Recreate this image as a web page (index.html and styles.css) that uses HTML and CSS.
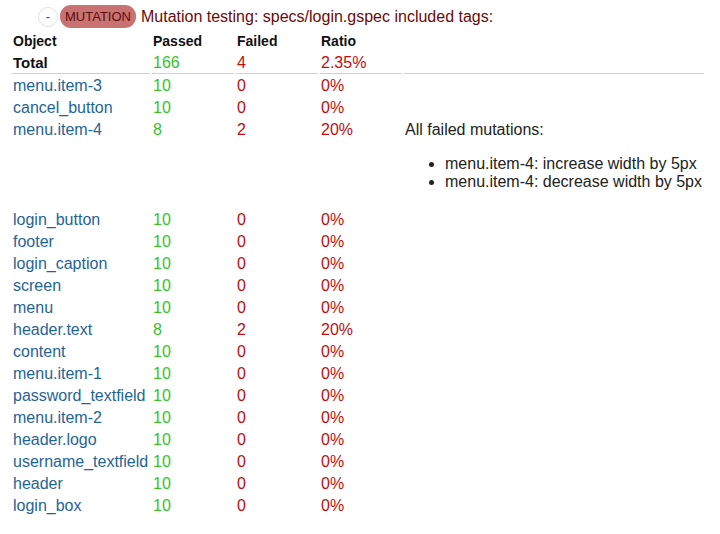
FILE: index.html
```html
<!DOCTYPE html>
<html>
<head>
<meta charset="utf-8">
<link rel="stylesheet" href="styles.css">
</head>
<body>
<div class="report">
  <div class="title">
    <span class="toggle">-</span>
    <span class="badge">MUTATION</span>
    <span class="title-text">Mutation testing: specs/login.gspec included tags:</span>
  </div>
  <table class="results">
    <thead>
      <tr><th class="c-obj">Object</th><th class="c-num">Passed</th><th class="c-num">Failed</th><th class="c-num">Ratio</th><th class="c-info"></th></tr>
    </thead>
    <tbody>
      <tr class="total"><td class="obj">Total</td><td class="pass">166</td><td class="fail">4</td><td class="fail">2.35%</td><td></td></tr>
      <tr><td class="obj">menu.item-3</td><td class="pass">10</td><td class="fail">0</td><td class="fail">0%</td><td></td></tr>
      <tr><td class="obj">cancel_button</td><td class="pass">10</td><td class="fail">0</td><td class="fail">0%</td><td></td></tr>
      <tr><td class="obj">menu.item-4</td><td class="pass">8</td><td class="fail">2</td><td class="fail">20%</td>
        <td class="info">All failed mutations:
          <ul>
            <li>menu.item-4: increase width by 5px</li>
            <li>menu.item-4: decrease width by 5px</li>
          </ul>
        </td></tr>
      <tr><td class="obj">login_button</td><td class="pass">10</td><td class="fail">0</td><td class="fail">0%</td><td></td></tr>
      <tr><td class="obj">footer</td><td class="pass">10</td><td class="fail">0</td><td class="fail">0%</td><td></td></tr>
      <tr><td class="obj">login_caption</td><td class="pass">10</td><td class="fail">0</td><td class="fail">0%</td><td></td></tr>
      <tr><td class="obj">screen</td><td class="pass">10</td><td class="fail">0</td><td class="fail">0%</td><td></td></tr>
      <tr><td class="obj">menu</td><td class="pass">10</td><td class="fail">0</td><td class="fail">0%</td><td></td></tr>
      <tr><td class="obj">header.text</td><td class="pass">8</td><td class="fail">2</td><td class="fail">20%</td><td></td></tr>
      <tr><td class="obj">content</td><td class="pass">10</td><td class="fail">0</td><td class="fail">0%</td><td></td></tr>
      <tr><td class="obj">menu.item-1</td><td class="pass">10</td><td class="fail">0</td><td class="fail">0%</td><td></td></tr>
      <tr><td class="obj">password_textfield</td><td class="pass">10</td><td class="fail">0</td><td class="fail">0%</td><td></td></tr>
      <tr><td class="obj">menu.item-2</td><td class="pass">10</td><td class="fail">0</td><td class="fail">0%</td><td></td></tr>
      <tr><td class="obj">header.logo</td><td class="pass">10</td><td class="fail">0</td><td class="fail">0%</td><td></td></tr>
      <tr><td class="obj">username_textfield</td><td class="pass">10</td><td class="fail">0</td><td class="fail">0%</td><td></td></tr>
      <tr><td class="obj">header</td><td class="pass">10</td><td class="fail">0</td><td class="fail">0%</td><td></td></tr>
      <tr><td class="obj">login_box</td><td class="pass">10</td><td class="fail">0</td><td class="fail">0%</td><td></td></tr>
    </tbody>
  </table>
</div>
</body>
</html>
```

FILE: styles.css
```css
html, body {
  margin: 0;
  padding: 0;
  background: #fff;
}
body {
  font-family: "Liberation Sans", Arial, sans-serif;
  font-size: 16px;
  color: #222;
}
.report {
  padding: 5px 0 0 10px;
}
.title {
  display: flex;
  align-items: center;
  height: 23px;
  padding-left: 28px;
}
.toggle {
  width: 18px;
  height: 18px;
  border: 1px solid #e2e2e2;
  border-radius: 50%;
  display: flex;
  align-items: center;
  justify-content: center;
  font-size: 13px;
  color: #444;
  margin-right: 2px;
}
.badge {
  background: #c87272;
  color: #5e0c0c;
  border-radius: 11px;
  height: 23px;
  padding: 0 5px;
  display: flex;
  align-items: center;
  font-size: 13px;
  margin-right: 5px;
}
.title-text {
  color: #6a0a0a;
  font-size: 16px;
}
.results {
  border-collapse: separate;
  border-spacing: 2px;
  width: 696px;
  margin-top: 1px;
  table-layout: fixed;
}
.results th {
  text-align: left;
  font-size: 14px;
  font-weight: bold;
  padding: 1px;
  color: #111;
  height: 18px;
}
.c-obj { width: 136px; }
.c-num { width: 80px; }
.c-info { width: 298px; }
.results td {
  padding: 1px;
  vertical-align: top;
  line-height: 18px;
  white-space: nowrap;
}
.total td {
  border-bottom: 1px solid #cfcfcf;
}
.total .obj {
  font-weight: bold;
  font-size: 15px;
  color: #111;
}
.obj { color: #1f6496; }
.pass { color: #33c52a; }
.fail { color: #c40c0c; }
.info {
  color: #222;
}
.info ul {
  margin: 16px 0;
  padding-left: 40px;
}
```
